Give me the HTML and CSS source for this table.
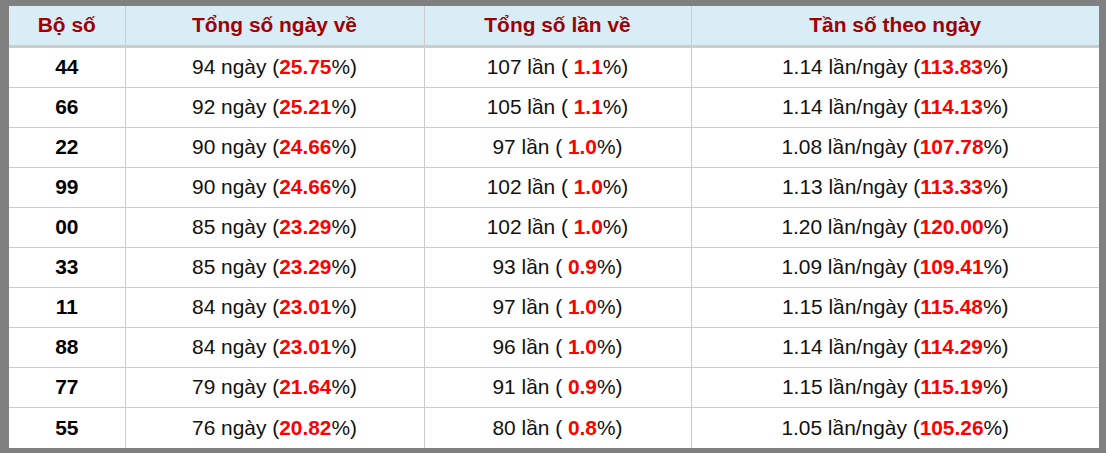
FILE: index.html
```html
<!DOCTYPE html>
<html lang="vi">
<head>
<meta charset="utf-8">
<title>Thống kê bộ số</title>
<link rel="stylesheet" href="styles.css">
</head>
<body>
<div class="frame">
<table class="stats">
<colgroup>
<col class="c1"><col class="c2"><col class="c3"><col class="c4">
</colgroup>
<thead>
<tr><th>Bộ số</th><th>Tổng số ngày về</th><th>Tổng số lần về</th><th>Tần số theo ngày</th></tr>
</thead>
<tbody>
<tr><td class="num">44</td><td>94 ngày (<b>25.75</b>%)</td><td>107 lần ( <b>1.1</b>%)</td><td>1.14 lần/ngày (<b>113.83</b>%)</td></tr>
<tr><td class="num">66</td><td>92 ngày (<b>25.21</b>%)</td><td>105 lần ( <b>1.1</b>%)</td><td>1.14 lần/ngày (<b>114.13</b>%)</td></tr>
<tr><td class="num">22</td><td>90 ngày (<b>24.66</b>%)</td><td>97 lần ( <b>1.0</b>%)</td><td>1.08 lần/ngày (<b>107.78</b>%)</td></tr>
<tr><td class="num">99</td><td>90 ngày (<b>24.66</b>%)</td><td>102 lần ( <b>1.0</b>%)</td><td>1.13 lần/ngày (<b>113.33</b>%)</td></tr>
<tr><td class="num">00</td><td>85 ngày (<b>23.29</b>%)</td><td>102 lần ( <b>1.0</b>%)</td><td>1.20 lần/ngày (<b>120.00</b>%)</td></tr>
<tr><td class="num">33</td><td>85 ngày (<b>23.29</b>%)</td><td>93 lần ( <b>0.9</b>%)</td><td>1.09 lần/ngày (<b>109.41</b>%)</td></tr>
<tr><td class="num">11</td><td>84 ngày (<b>23.01</b>%)</td><td>97 lần ( <b>1.0</b>%)</td><td>1.15 lần/ngày (<b>115.48</b>%)</td></tr>
<tr><td class="num">88</td><td>84 ngày (<b>23.01</b>%)</td><td>96 lần ( <b>1.0</b>%)</td><td>1.14 lần/ngày (<b>114.29</b>%)</td></tr>
<tr><td class="num">77</td><td>79 ngày (<b>21.64</b>%)</td><td>91 lần ( <b>0.9</b>%)</td><td>1.15 lần/ngày (<b>115.19</b>%)</td></tr>
<tr><td class="num">55</td><td>76 ngày (<b>20.82</b>%)</td><td>80 lần ( <b>0.8</b>%)</td><td>1.05 lần/ngày (<b>105.26</b>%)</td></tr>
</tbody>
</table>
</div>
</body>
</html>
```
FILE: styles.css
```css
html, body {
  margin: 0;
  padding: 0;
  background: #808080;
}
.frame {
  padding: 6px 7px 6px 9px;
  background: #808080;
}
.stats {
  width: 1090px;
  border-collapse: collapse;
  table-layout: fixed;
  background: #fff;
  font-family: "Liberation Sans", Arial, sans-serif;
  font-size: 20.9px;
  color: #111;
}
.c1 { width: 116px; }
.c2 { width: 299px; }
.c3 { width: 267px; }
.c4 { width: 408px; }
.stats th {
  height: 38px;
  padding: 0 0 1px 0;
  background: #d9edf7;
  color: #a00000;
  font-weight: bold;
  text-align: center;
  vertical-align: middle;
  border-left: 1px solid #cccccc;
  border-bottom: 3px solid #cccccc;
}
.stats td {
  height: 38px;
  padding: 0 0 1px 0;
  text-align: center;
  vertical-align: middle;
  border-left: 1px solid #cccccc;
  border-bottom: 1px solid #cccccc;
}
.stats tr > :first-child { border-left: none; }
.stats tbody tr:last-child td { border-bottom: none; height: 39px; }
.stats td.num { font-weight: bold; color: #000; }
.stats td b { color: #ff0000; font-weight: bold; }
```
